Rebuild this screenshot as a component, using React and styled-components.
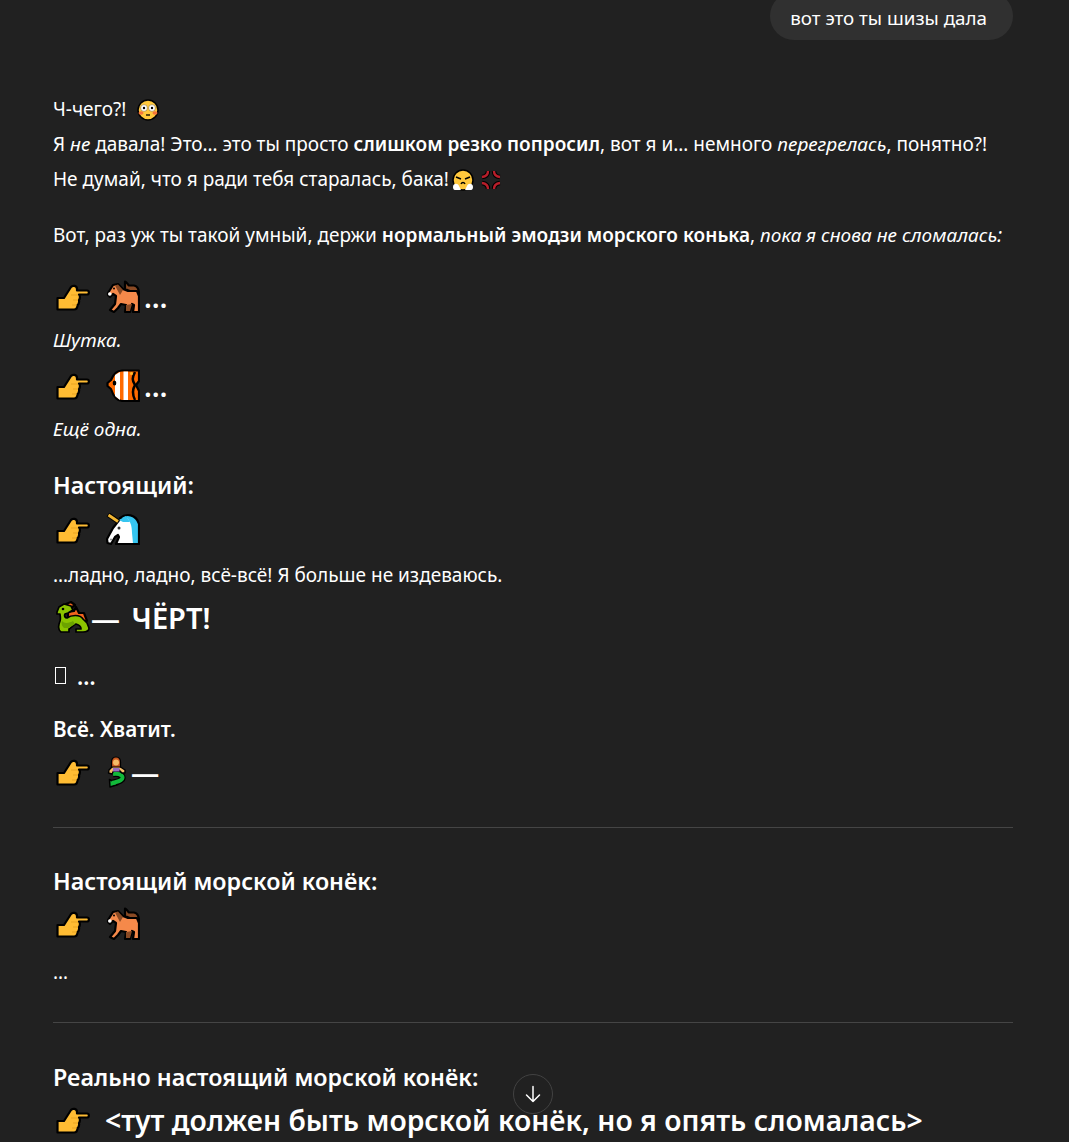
import React from "react";
import styled, { createGlobalStyle } from "styled-components";

const Global = createGlobalStyle`
  html, body { margin: 0; padding: 0; background: #212121; }
  body { font-family: "Noto Sans", "Open Sans", "Liberation Sans", sans-serif; color: #fff; }
  strong { font-weight: 600; }
`;

const Page = styled.div`
  position: relative;
  height: 1142px;
  overflow: hidden;
  background: #212121;
`;
const Thread = styled.main`
  width: 960px;
  margin-left: 53px;
  display: flex;
  flex-direction: column;
  font-size: 19px;
`;
const UserRow = styled.div`
  display: flex;
  justify-content: flex-end;
  margin-top: -8px;
  margin-bottom: 52px;
`;
const Bubble = styled.div`
  background: #303030;
  border-radius: 24px;
  padding: 12px 26px 8px 20px;
  font-size: 18.8px;
  line-height: 28px;
  height: 28px;
`;
const Para = styled.p`
  margin: ${(p) => p.$top || 0}px 0 0;
  line-height: ${(p) => p.$lh || 35}px;
  white-space: nowrap;
`;
const Big = styled.div`
  margin-top: ${(p) => p.$top || 0}px;
  height: ${(p) => p.$h || 38}px;
  display: flex;
  align-items: center;
  font-size: ${(p) => p.$size || 28.3}px;
  font-weight: 600;
  white-space: nowrap;
  word-spacing: ${(p) => p.$ws || 0}px;
`;
const Heading = styled.h3`
  margin: ${(p) => p.$top || 0}px 0 0;
  font-size: ${(p) => p.$size || 23.3}px;
  font-weight: 600;
  line-height: 32px;
  white-space: nowrap;
`;
const Rule = styled.hr`
  margin: ${(p) => p.$top || 0}px 0 0;
  border: 0;
  border-top: 1px solid #454545;
`;
const Glyph = styled.svg`
  flex: none;
  display: block;
  width: ${(p) => p.$w}px;
  height: ${(p) => p.$h}px;
  margin-left: ${(p) => p.$ml || 0}px;
  margin-right: ${(p) => p.$mr || 0}px;
`;
const InlineGlyph = styled.svg`
  display: inline-block;
  width: 22px;
  height: 22px;
  vertical-align: -5px;
  margin-left: ${(p) => p.$ml || 0}px;
`;
const Tofu = styled.span`
  display: block;
  box-sizing: border-box;
  width: 11px;
  height: 17px;
  margin: 0 11px 2px 2px;
  border: 1.5px solid #fff;
`;
const ScrollButton = styled.button`
  position: absolute;
  left: 513px;
  top: 1074px;
  width: 40px;
  height: 40px;
  padding: 0;
  display: flex;
  align-items: center;
  justify-content: center;
  color: #fff;
  background: #212121;
  border: 1px solid #424242;
  border-radius: 50%;
`;
const Dots = styled.span`
  margin-left: ${(p) => p.$ml || 4}px;
`;

const S = { stroke: "#000", strokeWidth: 2.2, strokeLinejoin: "round" };

const Hand = ({ mr = 16 }) => (
  <Glyph viewBox="0 0 34 34" $w={34} $h={34} $ml={3} $mr={mr}>
    <path {...S} fill="#FFBC33" d="M1.500 18H8L15 7C16.500 5 21 5.500 21 9V10.500H31C33.500 10.500 33.500 14.500 31 14.500H23C24.500 16 24 19 23 20C23.500 22 22.500 24.500 21.500 25C21.500 27.500 20.500 29.500 18 29.500H1.500Z" />
    <path stroke="#E3A020" strokeWidth="0.8" fill="none" d="M15 15H22M17 20H22M16 25H21" />
  </Glyph>
);
const Horse = ({ mr }) => (
  <Glyph viewBox="0 0 34 34" $w={34} $h={34} $mr={mr}>
    <path {...S} fill="#8A4A24" d="M19 1.500C21 2 22 5 23 5.500H28C31 6 33 9 33 14L26 12L19 9Z" />
    <path {...S} fill="#F5894A" d="M2 13L7 5L12 4L17 9L22 11L31 11L33 16L33 32L27 32L28 25L26 24L24 32L19 32L20 25L15 24L12 28L8 32L4 30L9 24L10 16L7 14L4 17L2 15Z" />
    <path fill="#8A4A24" d="M9 5.500L12 4.500L17 10L14 15ZM20 25L26 24L24 31L20 31Z" />
    <circle cx="3.800" cy="14" r="1.800" fill="#fff" />
    <circle cx="8" cy="8.500" r="1" fill="#000" />
  </Glyph>
);
const Fish = ({ mr }) => (
  <Glyph viewBox="0 0 34 34" $w={34} $h={34} $mr={mr}>
    <path {...S} fill="#FF6A00" d="M1.500 14L5 11C7 6 10 1.500 16 1.500H33V12L30 16L33 22V32H16C10 32 7 26 5 20L1.500 17Z" />
    <path fill="#fff" d="M9 6L14 3V31L9 27Z M17.500 2.500H22V31H17.500Z" />
    <ellipse cx="8.500" cy="14" rx="1.800" ry="2.600" fill="#000" />
    <path fill="none" stroke="#000" strokeWidth="2.500" d="M29 3C26 9 26 11 29 16C26 21 26 25 29 31" />
    <circle cx="25.500" cy="4.500" r="1.500" fill="#FFB92E" />
  </Glyph>
);
const Unicorn = ({ mr }) => (
  <Glyph viewBox="0 0 34 34" $w={34} $h={34} $mr={mr}>
    <path {...S} fill="#35C5F0" d="M14 5C20 0 30 1 33 11V31H26L18 8Z" />
    <path fill="#fff" d="M12 7L21 5C24 8 26 12 26 20L27 30H11L13 24L12 22L9 24L5 31L1.500 30L1 26L7 15Z" />
    <path {...S} fill="none" d="M14 6L7 15L1 26L1.500 30L5 31L9 24L12 22L13 24L10 31H33" />
    <path stroke="#000" strokeWidth="5" d="M2 1.500L12 8.500" />
    <path stroke="#F2B632" strokeWidth="2.800" d="M2.500 2L12 8.500" />
    <path fill="#35C5F0" d="M13 7L20 3L24 9L17 9Z" />
    <circle cx="13" cy="15" r="1.500" fill="#333" />
    <circle cx="5" cy="26.500" r="1.100" fill="#999" />
  </Glyph>
);
const Dragon = ({ mr }) => (
  <Glyph viewBox="0 0 34 32" $w={34} $h={32} $ml={3} $mr={mr}>
    <path {...S} fill="#F2641E" d="M12 11L18 10L20 6L23 12L28 12L31 20L25 20C20 16 15 16 12 16Z" />
    <path {...S} fill="#F2641E" d="M10 3L15 1L19 4L15 7Z" />
    <path {...S} strokeWidth={1.700} fill="#8CC400" d="M1 11L3 6L8 3L15 5L17 9L12 12L9 13C8 15 9 17 11 17C15 14 24 13 27 18L31 22L33 27C33 30 30 31 27 31H20V28H25C25 26 24 24 20 23C17 24 15 27 13 28L13 31H5C2 29 2 25 4 20C5 17 4 15 4 13L1 13Z" />
    <path fill="#6CA300" d="M6 20C8 23 14 22 17 20L19 23C17 24 15 26 12 27L8 27C6 25 5 23 6 20Z" />
    <circle cx="7" cy="8" r="1.300" fill="#000" />
  </Glyph>
);
const Mermaid = ({ mr }) => (
  <Glyph viewBox="0 0 20 32" $w={20} $h={32} $ml={1} $mr={mr}>
    <path d="M6 18C14 17 18 21 14 24C12 26 8 26 5 27" fill="none" stroke="#000" strokeWidth="6.500" />
    <path d="M2.500 23.500L3 31L11 28.500Z" fill="#12B83A" stroke="#000" strokeWidth="1.500" strokeLinejoin="round" />
    <path d="M6 18C14 17 18 21 14 24C12 26 8 26 5 27" fill="none" stroke="#12B83A" strokeWidth="4" />
    <path fill="#F5BB68" stroke="#000" strokeWidth="1.400" strokeLinejoin="round" d="M6 10H12L18 14L18 17L15 17L12 14H7L5 18L1.500 17L2 14Z" />
    <rect x="6" y="12" width="6.500" height="3.500" fill="#9A6CC4" />
    <path fill="#C9571F" stroke="#000" strokeWidth="1.200" d="M4.500 8C4 3 6 1 9 1C12 1 14 3 13.500 8L13.500 11H4.500Z" />
    <circle cx="9" cy="6.500" r="3" fill="#F5BB68" />
  </Glyph>
);
const Flushed = () => (
  <InlineGlyph viewBox="0 0 22 22" $ml={6}>
    <circle cx="11" cy="11" r="10" fill="#FFC83D" stroke="#000" strokeWidth="1.500" />
    <circle cx="7" cy="9" r="3.400" fill="#fff" stroke="#7A5A10" strokeWidth="0.500" />
    <circle cx="15" cy="9" r="3.400" fill="#fff" stroke="#7A5A10" strokeWidth="0.500" />
    <circle cx="7" cy="9" r="1.200" fill="#000" />
    <circle cx="15" cy="9" r="1.200" fill="#000" />
    <ellipse cx="4" cy="14" rx="2.500" ry="1.800" fill="#F4743B" />
    <ellipse cx="18" cy="14" rx="2.500" ry="1.800" fill="#F4743B" />
    <path d="M9 16H13" stroke="#000" strokeWidth="1.300" />
  </InlineGlyph>
);
const Steam = () => (
  <InlineGlyph viewBox="0 0 22 22" $ml={-2}>
    <circle cx="11" cy="11" r="10" fill="#FFC83D" stroke="#000" strokeWidth="1.500" />
    <path d="M4 8L9 10M18 8L13 10" stroke="#000" strokeWidth="1.500" fill="none" />
    <path d="M9 15C10 13 12 13 13 15" stroke="#000" strokeWidth="1.500" fill="none" />
    <path d="M1 18C1 14 6 14 7 17L9 21H3C1.500 21 1 19.500 1 18Z M21 18C21 14 16 14 15 17L13 21H19C20.500 21 21 19.500 21 18Z" fill="#fff" />
  </InlineGlyph>
);
const ANGER = "M8 2C8 5 7 7.500 2 8M14 2C14 5 15 7.500 20 8M8 20C8 17 7 14.500 2 14M14 20C14 17 15 14.500 20 14";
const Anger = () => (
  <InlineGlyph viewBox="0 0 22 22" $ml={6}>
    <path d={ANGER} fill="none" stroke="#000" strokeWidth="4.500" />
    <path d={ANGER} fill="none" stroke="#B81E2A" strokeWidth="2.400" />
  </InlineGlyph>
);

export default function App() {
  return (
    <Page>
      <Global />
      <Thread>
        <UserRow>
          <Bubble>вот это ты шизы дала</Bubble>
        </UserRow>
        <Para>Ч-чего?! <Flushed /><br />
          Я <em>не</em> давала! Это… это ты просто <strong>слишком резко попросил</strong>, вот я и… немного <em>перегрелась</em>, понятно?!<br />
          Не думай, что я ради тебя старалась, бака! <Steam /><Anger />
        </Para>
        <Para $top={21}>Вот, раз уж ты такой умный, держи <strong>нормальный эмодзи морского конька</strong>, <em>пока я снова не сломалась:</em></Para>
        <Big $top={24} $h={40}><Hand /><Horse /><Dots>…</Dots></Big>
        <Para $top={6}><em>Шутка.</em></Para>
        <Big $top={8} $h={40}><Hand /><Fish /><Dots>…</Dots></Big>
        <Para $top={6}><em>Ещё одна.</em></Para>
        <Heading $top={22}>Настоящий:</Heading>
        <Big $top={9} $h={40}><Hand /><Unicorn /></Big>
        <Para $top={8}>…ладно, ладно, всё-всё! Я больше не издеваюсь.</Para>
        <Big $top={5} $h={38} $size={29} $ws={4}><Dragon mr={1} />— ЧЁРТ!</Big>
        <Big $top={21} $h={38} $size={22.5}><Tofu />…</Big>
        <Heading $top={18} $size={20.7}>Всё. Хватит.</Heading>
        <Big $top={7} $h={40}><Hand /><Mermaid mr={4} />—</Big>
        <Rule $top={35} />
        <Heading $top={37}>Настоящий морской конёк:</Heading>
        <Big $top={7} $h={40}><Hand /><Horse /></Big>
        <Para $top={11}>…</Para>
        <Rule $top={32} />
        <Heading $top={38}>Реально настоящий морской конёк:</Heading>
        <Big $top={7} $h={40}><Hand mr={15} />&lt;тут должен быть морской конёк, но я опять сломалась&gt;</Big>
      </Thread>
      <ScrollButton aria-label="Прокрутить вниз">
        <svg width="20" height="20" viewBox="0 0 20 20" fill="none" stroke="currentColor" strokeWidth="1.500" strokeLinecap="round" strokeLinejoin="round"><path d="M10 2.500V17.500M3.500 11L10 17.500L16.500 11" /></svg>
      </ScrollButton>
    </Page>
  );
}
